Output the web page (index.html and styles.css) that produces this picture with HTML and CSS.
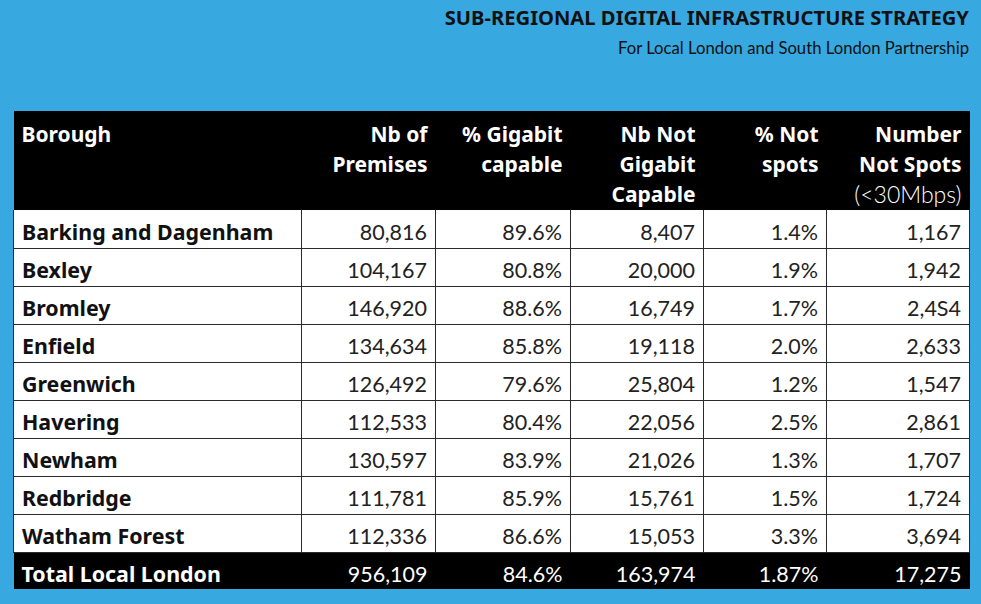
FILE: index.html
```html
<!DOCTYPE html>
<html>
<head>
<meta charset="utf-8">
<link rel="stylesheet" href="styles.css">
</head>
<body>
<div class="page">
  <header class="head">
    <h1 class="title">SUB-REGIONAL DIGITAL INFRASTRUCTURE STRATEGY</h1>
    <p class="subtitle">For Local London and South London Partnership</p>
  </header>
  <table class="data">
    <colgroup>
      <col class="c1"><col class="c2"><col class="c3"><col class="c4"><col class="c5"><col class="c6">
    </colgroup>
    <thead>
      <tr>
        <th class="name">Borough</th>
        <th>Nb of<br>Premises</th>
        <th>% Gigabit<br>capable</th>
        <th>Nb Not<br>Gigabit<br>Capable</th>
        <th>% Not<br>spots</th>
        <th>Number<br>Not Spots<br><span class="light">(&lt;30Mbps)</span></th>
      </tr>
    </thead>
    <tbody>
      <tr><td class="name">Barking and Dagenham</td><td>80,816</td><td>89.6%</td><td>8,407</td><td>1.4%</td><td>1,167</td></tr>
      <tr><td class="name">Bexley</td><td>104,167</td><td>80.8%</td><td>20,000</td><td>1.9%</td><td>1,942</td></tr>
      <tr><td class="name">Bromley</td><td>146,920</td><td>88.6%</td><td>16,749</td><td>1.7%</td><td>2,4S4</td></tr>
      <tr><td class="name">Enfield</td><td>134,634</td><td>85.8%</td><td>19,118</td><td>2.0%</td><td>2,633</td></tr>
      <tr><td class="name">Greenwich</td><td>126,492</td><td>79.6%</td><td>25,804</td><td>1.2%</td><td>1,547</td></tr>
      <tr><td class="name">Havering</td><td>112,533</td><td>80.4%</td><td>22,056</td><td>2.5%</td><td>2,861</td></tr>
      <tr><td class="name">Newham</td><td>130,597</td><td>83.9%</td><td>21,026</td><td>1.3%</td><td>1,707</td></tr>
      <tr><td class="name">Redbridge</td><td>111,781</td><td>85.9%</td><td>15,761</td><td>1.5%</td><td>1,724</td></tr>
      <tr><td class="name">Watham Forest</td><td>112,336</td><td>86.6%</td><td>15,053</td><td>3.3%</td><td>3,694</td></tr>
    </tbody>
    <tfoot>
      <tr><td class="name">Total Local London</td><td>956,109</td><td>84.6%</td><td>163,974</td><td>1.87%</td><td>17,275</td></tr>
    </tfoot>
  </table>
</div>
</body>
</html>
```
FILE: styles.css
```css
html, body {
  margin: 0;
  padding: 0;
  background: #37a8e0;
}
body {
  font-family: Lato, "Noto Sans", sans-serif;
  width: 981px;
  height: 604px;
  overflow: hidden;
}
.page {
  padding: 4px 12px 0 13px;
}
.head {
  text-align: right;
  color: #111;
}
.title {
  margin: 0;
  font-family: "Noto Sans", Lato, sans-serif;
  font-size: 20.2px;
  font-weight: 700;
  line-height: 26px;
}
.subtitle {
  margin: 8px 0 0;
  font-size: 16.7px;
  line-height: 20px;
  font-weight: 400;
}
.data {
  margin-top: 53px;
  border-collapse: collapse;
  table-layout: fixed;
  width: 956px;
  font-size: 21.5px;
}
.c1 { width: 288px; }
.c2 { width: 134px; }
.c3 { width: 135px; }
.c4 { width: 133px; }
.c5 { width: 123px; }
.c6 { width: 143px; }
thead tr {
  background: #000;
  color: #fff;
}
th {
  height: 98px;
  padding: 8px 8px 0 8px;
  box-sizing: border-box;
  vertical-align: top;
  text-align: right;
  font-family: "Noto Sans", Lato, sans-serif;
  font-weight: 700;
  line-height: 30px;
  font-size: 21px;
}
th.name, td.name {
  text-align: left;
  padding-left: 8px;
}
.light {
  font-family: Lato, sans-serif;
  font-weight: 300;
  font-size: 23px;
}
tbody tr {
  background: #fff;
}
tbody td {
  height: 38px;
  box-sizing: border-box;
  border: 1px solid #2a2a2a;
  padding: 6px 8px 0;
  text-align: right;
  color: #222;
  font-weight: 400;
  line-height: 30px;
}
td.name {
  font-family: "Noto Sans", Lato, sans-serif;
  font-weight: 700;
  font-size: 21.4px;
}
tbody td.name {
  color: #111;
  padding-left: 8px;
}
tbody tr:first-child td {
  border-top: none;
}
tfoot tr {
  background: #000;
  color: #fff;
}
tfoot td {
  height: 37px;
  padding: 6px 8px 0;
  box-sizing: border-box;
  text-align: right;
  line-height: 30px;
  font-weight: 400;
}
```
